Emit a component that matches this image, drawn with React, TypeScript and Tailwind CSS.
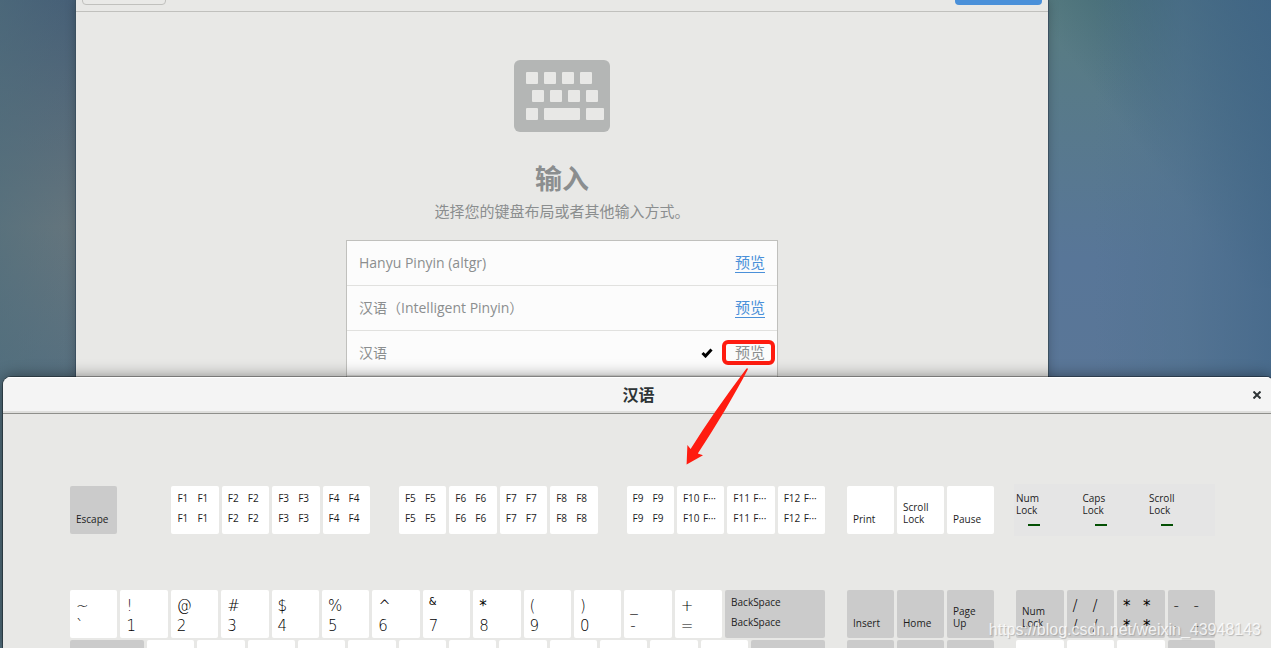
import type { ReactNode } from "react";
import clsx from "clsx";

type KeyProps = {
  /** legends in reading order, two per row when there are four */
  legends?: string[];
  name?: string;
  dark?: boolean;
  large?: boolean;
  className?: string;
};

const numberRow = [
  ["~", "`"],
  ["!", "1"],
  ["@", "2"],
  ["#", "3"],
  ["$", "4"],
  ["%", "5"],
  ["^", "6"],
  ["&", "7"],
  ["*", "8"],
  ["(", "9"],
  [")", "0"],
  ["_", "-"],
  ["+", "="],
];

const layouts = [
  { name: "Hanyu Pinyin (altgr)", selected: false },
  { name: "汉语（Intelligent Pinyin）", selected: false },
  { name: "汉语", selected: true },
];

export default function App() {
  return (
    <div className="relative h-screen overflow-hidden bg-[#4a6378] font-['Open_Sans','Noto_Sans_CJK_SC',sans-serif]">
      {/* Wallpaper */}
      <div className="absolute inset-y-0 left-0 w-24 bg-linear-to-b from-[#455d76] via-[#68767d] via-35% to-[#587080] to-58%" />
      <div className="absolute inset-y-0 left-0 w-24 bg-linear-to-r from-[#4f6e7c]/60 to-transparent" />
      <div className="absolute inset-y-0 right-0 w-56 bg-linear-to-b from-[#587c80] via-[#587698] via-40% to-[#5a7697] to-60%" />
      <div className="absolute right-0 top-0 h-72 w-56 bg-linear-to-bl from-[#2d5870] to-transparent to-55%" />
      <div className="absolute inset-y-0 right-0 w-44 bg-linear-to-r from-transparent via-[#507290]/60 to-[#45698a]/80" />

      <SetupWindow />
      <PreviewWindow />

      {/* Arrow from the preview link to the keyboard */}
      <svg className="absolute left-1/2 top-[366px] ml-12 h-25 w-16" viewBox="684 366 64 100" fill="#ff1c10">
        <path d="M746.5 368.5Q748 367.5 747.8 369.5C735 394 716 426 697.8 453.5L703 455.2L686.6 464.4L687.4 445L690.6 449Q713 413 746.5 368.5Z" />
      </svg>

      <div className="absolute bottom-1.5 right-2.5 text-base leading-6 text-white/80 font-['Liberation_Sans',sans-serif] [text-shadow:1px_1px_1px_#8888]">
        https://blog.csdn.net/weixin_43948143
      </div>
    </div>
  );
}

function SetupWindow() {
  return (
    <main className="relative ml-19 mr-[223px] h-full bg-[#e8e8e6] shadow-[0_0_0_1px_#3b5060,0_0_10px_#0004]">
      <header className="flex h-3 items-end justify-between border-b border-[#c0c0bd] px-1.5 pb-1.5">
        <button aria-label="上一步" className="h-9 w-21 shrink-0 rounded border border-[#c0c0bd] bg-[#e9e9e7]" />
        <button aria-label="下一步" className="h-9 w-[87px] shrink-0 rounded bg-[#4a90d9]" />
      </header>

      <section className="flex flex-col items-center pt-12 text-[#8b8e8f]">
        <KeyboardIcon />
        <h1 className="mt-[27px] text-[27px] font-bold leading-10">输入</h1>
        <p className="mt-0.5 text-[15px] leading-5">选择您的键盘布局或者其他输入方式。</p>
        <ul className="mt-[19px] h-50 w-108 border border-[#c0c0bd] bg-[#fcfcfc]">
          {layouts.map((layout) => (
            <li key={layout.name} className="flex h-[45px] items-center border-b border-[#e1e1df] px-3 pb-0.5 text-[15px]">
              <span className="grow pt-0.5 text-sm">{layout.name}</span>
              {layout.selected && <CheckIcon />}
              <span className="relative leading-5">
                <a
                  href="#"
                  className={clsx("block border-b", layout.selected ? "border-transparent" : "border-[#4a90d9] text-[#4a90d9]")}
                >
                  预览
                </a>
                {layout.selected && (
                  <span className="absolute -bottom-0.5 -left-[13px] -right-2.5 -top-0.5 rounded-md border-4 border-[#ff1c10]" />
                )}
              </span>
            </li>
          ))}
        </ul>
      </section>
    </main>
  );
}

function PreviewWindow() {
  return (
    <div className="absolute -right-[3px] bottom-0 left-[3px] top-[377px] overflow-hidden rounded-t-lg bg-[#e8e8e6] shadow-[0_0_0_1px_#0005,0_0_16px_#0007]">
      <header className="relative flex h-[37px] items-center justify-center border-b border-[#8e8f8b] bg-[#f4f4f4] shadow-[inset_0_1px_#fff,inset_0_-2px_#dededc]">
        <h2 className="text-base font-bold text-[#2e3436]">汉语</h2>
        <button aria-label="关闭" className="absolute right-[11px] flex size-3 items-center justify-center">
          <svg className="size-2" viewBox="0 0 8 8" stroke="#2e3436" strokeWidth="2">
            <path d="M.5.5l7 7M7.5.5l-7 7" />
          </svg>
        </button>
      </header>

      <div className="grid grid-cols-[755fr_147fr_199fr] gap-x-[22px] pl-[67px] pr-[59px] pt-18">
        <Row>
          <Key name="Escape" dark />
          <div className="w-12 shrink-0" />
          <Key legends={fn(1)} />
          <Key legends={fn(2)} />
          <Key legends={fn(3)} />
          <Key legends={fn(4)} />
          <div className="w-[23px] shrink-0" />
          <Key legends={fn(5)} />
          <Key legends={fn(6)} />
          <Key legends={fn(7)} />
          <Key legends={fn(8)} />
          <div className="w-[23px] shrink-0" />
          <Key legends={fn(9)} />
          <Key legends={fn(10)} />
          <Key legends={fn(11)} />
          <Key legends={fn(12)} />
        </Row>
        <Row>
          <Key name="Print" />
          <Key name="Scroll Lock" />
          <Key name="Pause" />
        </Row>
        <div className="-my-0.5 -ml-0.5 flex h-13 justify-between bg-[#e5e5e5] pl-0.5 pr-[30px] pt-2">
          <Indicator name="Num Lock" />
          <Indicator name="Caps Lock" />
          <Indicator name="Scroll Lock" />
        </div>

        <Row className="mt-14">
          {numberRow.map((legends) => (
            <Key key={legends[1]} legends={legends} large />
          ))}
          <Key legends={["BackSpace", "BackSpace"]} dark className="w-25 flex-none" />
        </Row>
        <Row className="mt-14">
          <Key name="Insert" dark />
          <Key name="Home" dark />
          <Key name="Page Up" dark />
        </Row>
        <Row className="mt-14">
          <Key name="Num Lock" dark />
          <Key legends={["/", "/", "/", "/"]} dark large />
          <Key legends={["*", "*", "*", "*"]} dark large />
          <Key legends={["-", "-", "-", "-"]} dark large />
        </Row>

        <Row className="mt-0.5">
          <Key dark className="w-[74px] flex-none" />
          {numberRow.slice(1).map((legends) => (
            <Key key={legends[1]} />
          ))}
          <Key dark className="w-[74px] flex-none" />
        </Row>
        <Row className="mt-0.5">
          <Key dark />
          <Key dark />
          <Key dark />
        </Row>
        <Row className="mt-0.5">
          <Key />
          <Key />
          <Key />
          <Key dark />
        </Row>
      </div>
    </div>
  );
}

function fn(n: number) {
  const first = `F${n}`;
  const second = n > 9 ? "F···" : first;
  return [first, second, first, second];
}

function Row({ children, className }: { children: ReactNode; className?: string }) {
  return <div className={clsx("flex gap-[3px]", className)}>{children}</div>;
}

function Key({ legends, name, dark, large, className }: KeyProps) {
  return (
    <div
      className={clsx(
        "flex h-12 min-w-0 flex-1 flex-col overflow-hidden rounded-xs pl-1.5 text-[10px] text-[#1c1c1c]",
        dark ? "bg-[#cbcbcb]" : "bg-white",
        name && "justify-end pb-[9px] leading-3",
        className,
      )}
    >
      {name && <span className="w-9">{name}</span>}
      {legends && (
        <div
          className={clsx(
            "grid auto-rows-[20px] whitespace-nowrap",
            legends.length > 2 && "grid-cols-[20px_20px]",
            large ? "pt-1.5 text-[15px] font-extralight leading-5 text-black font-['DejaVu_Sans',sans-serif]" : "pt-0.5 leading-5",
          )}
        >
          {legends.map((legend, i) => (
            <span key={i} className={clsx(legend === "&" && "text-[10px] font-normal leading-3", legend === "*" && "font-normal")}>
              {legend}
            </span>
          ))}
        </div>
      )}
    </div>
  );
}

function Indicator({ name }: { name: string }) {
  return (
    <div className="w-9 text-[10px] leading-3 text-[#1c1c1c]">
      {name}
      <div className="ml-3 mt-2 h-0.5 w-3 bg-[#045004]" />
    </div>
  );
}

function CheckIcon() {
  return (
    <svg className="mr-[22px] h-3 w-3" viewBox="0 0 12 12" fill="none" stroke="#000" strokeWidth="3">
      <path d="M1.5 7l3 3L10.5 3.5" />
    </svg>
  );
}

function KeyboardIcon() {
  return (
    <svg className="h-18 w-24" viewBox="0 0 96 72">
      <rect width="96" height="72" rx="6" fill="#b4b6b5" />
      <g fill="#e8e8e6">
        <rect x="12" y="12" width="12" height="12" rx="1" />
        <rect x="30" y="12" width="12" height="12" rx="1" />
        <rect x="48" y="12" width="12" height="12" rx="1" />
        <rect x="66" y="12" width="12" height="12" rx="1" />
        <rect x="18" y="30" width="12" height="12" rx="1" />
        <rect x="36" y="30" width="12" height="12" rx="1" />
        <rect x="54" y="30" width="12" height="12" rx="1" />
        <rect x="72" y="30" width="12" height="12" rx="1" />
        <rect x="12" y="48" width="12" height="12" rx="1" />
        <rect x="30" y="48" width="36" height="12" rx="1" />
        <rect x="72" y="48" width="18" height="12" rx="1" />
      </g>
    </svg>
  );
}
